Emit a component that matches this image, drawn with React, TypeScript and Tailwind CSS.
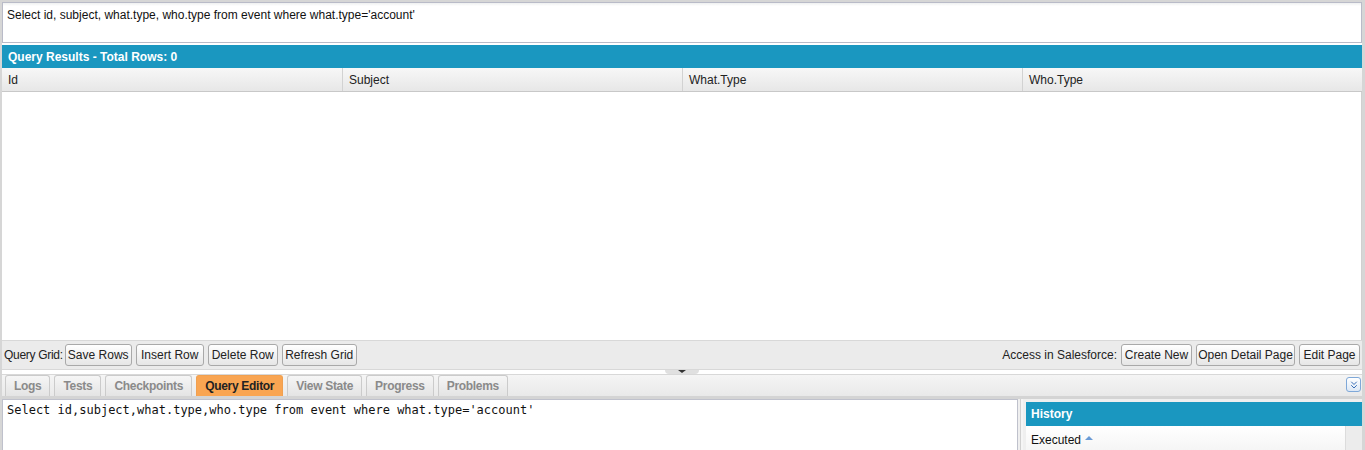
import { ChevronsDown } from "lucide-react";

const sans = "font-['Tahoma','Liberation_Sans','DejaVu_Sans',sans-serif]";

type Btn = { label: string; w: string };

function Button({ label, w }: Btn) {
  return (
    <button
      className={`h-[22px] ${w} rounded-[3px] border border-[#a9a9a9] bg-gradient-to-b from-white to-[#e6e6e6] text-[12px] text-[#222] leading-none`}
    >
      {label}
    </button>
  );
}

function Tab({ label, active }: { label: string; active?: boolean }) {
  return (
    <div
      className={`h-[21px] px-[8px] flex items-center rounded-t-[3px] border border-b-0 text-[12px] font-bold tracking-[-0.3px] ${
        active
          ? "bg-[#f9a552] border-[#f0a050] text-[#222]"
          : "bg-gradient-to-b from-[#f6f6f6] to-[#e4e4e4] border-[#cbcbcb] text-[#8a8a8a]"
      }`}
    >
      {label}
    </div>
  );
}

export default function App() {
  const cols = ["Id", "Subject", "What.Type", "Who.Type"];
  const left: Btn[] = [
    { label: "Save Rows", w: "w-[67px]" },
    { label: "Insert Row", w: "w-[68px]" },
    { label: "Delete Row", w: "w-[70px]" },
    { label: "Refresh Grid", w: "w-[75px]" },
  ];
  const right: Btn[] = [
    { label: "Create New", w: "w-[71px]" },
    { label: "Open Detail Page", w: "w-[99px]" },
    { label: "Edit Page", w: "w-[61px]" },
  ];
  const tabs = ["Logs", "Tests", "Checkpoints", "Query Editor", "View State", "Progress", "Problems"];

  return (
    <div className={`h-[450px] w-full overflow-hidden bg-[#d6d6d6] pt-[2px] pl-[2px] pr-[3px] ${sans}`}>
      <div className="bg-white">
        {/* query text */}
        <div className="h-[41px] border border-[#b9bbc8] bg-gradient-to-b from-[#eef0f0] via-white to-white via-[8%] px-[4px] pt-[3px] text-[12px] text-[#111]">
          Select id, subject, what.type, who.type from event where what.type='account'
        </div>
        <div className="h-[2px] bg-white" />

        {/* results */}
        <div className="h-[23px] bg-[#1a97c0] flex items-center px-[6px] text-[12px] font-bold text-white">
          Query Results - Total Rows: 0
        </div>
        <div className="h-[24px] grid grid-cols-4 bg-gradient-to-b from-[#f7f7f7] to-[#e7e7e7] border-b border-[#c8c8c8]">
          {cols.map((c, i) => (
            <div
              key={c}
              className={`flex items-center px-[6px] text-[12px] text-[#222] ${i > 0 ? "border-l border-[#d2d2d2]" : ""}`}
            >
              {c}
            </div>
          ))}
        </div>
        <div className="h-[248px] bg-white border-r border-[#d0d0d0]" />

        {/* toolbar */}
        <div className="h-[29px] bg-[#ebebeb] border-t border-[#d8d8d8] flex items-center px-[2px] text-[12px] text-[#222]">
          <span className="mr-[2px] tracking-[-0.3px]">Query Grid:</span>
          <div className="flex gap-[4px]">
            {left.map((b) => (
              <Button key={b.label} {...b} />
            ))}
          </div>
          <span className="ml-auto mr-[4px]">Access in Salesforce:</span>
          <div className="flex gap-[4px]">
            {right.map((b) => (
              <Button key={b.label} {...b} />
            ))}
          </div>
        </div>

        {/* splitter */}
        <div className="h-[6px] bg-white border-y border-[#d8d8d8] flex justify-center">
          <div className="w-[34px] h-[4px] bg-[#e0e0e0] rounded-b-[4px] flex justify-center">
            <div className="w-0 h-0 border-l-[4px] border-r-[4px] border-t-[3px] border-l-transparent border-r-transparent border-t-[#333]" />
          </div>
        </div>

        {/* tab bar */}
        <div className="h-[24px] bg-gradient-to-b from-[#f5f5f5] to-[#e9e9e9] border-b-[3px] border-[#d4d4d4] flex items-end pl-[3px] gap-[4px] relative">
          {tabs.map((t) => (
            <Tab key={t} label={t} active={t === "Query Editor"} />
          ))}
          <div className="absolute right-[1px] top-[2px] w-[15px] h-[15px] rounded-[3px] border border-[#7fa8d8] bg-gradient-to-b from-white to-[#dde8f5] flex items-center justify-center">
            <ChevronsDown size={12} strokeWidth={2} className="text-[#3a6fb8]" />
          </div>
        </div>

        {/* bottom */}
        <div className="h-[55px] flex bg-[#efefef]">
          <div className="w-[1016px] border border-[#bfc1cc] bg-white px-[4px] pt-[1px] font-['DejaVu_Sans_Mono',monospace] text-[12px] text-[#111]">
            Select id,subject,what.type,who.type from event where what.type='account'
          </div>
          <div className="w-[3px] ml-[2px] border-l border-[#d0d0d0] bg-[#f5f5f5]" />
          <div className="flex-1 ml-[3px] pt-[3px]">
            <div className="h-[24px] bg-[#1a97c0] flex items-center px-[5px] text-[12px] font-bold text-white">
              History
            </div>
            <div className="flex h-[30px]">
              <div className="flex-1 bg-gradient-to-b from-white to-[#f3f3f3] flex items-start pt-[5px] px-[5px] text-[12px] text-[#111]">
                Executed
                <span className="ml-[4px] mt-[5px] w-0 h-0 border-l-[4px] border-r-[4px] border-b-[4px] border-l-transparent border-r-transparent border-b-[#6b9bd6]" />
              </div>
              <div className="w-[17px] bg-[#ececec] border-l border-[#dcdcdc]" />
            </div>
          </div>
        </div>
      </div>
    </div>
  );
}
